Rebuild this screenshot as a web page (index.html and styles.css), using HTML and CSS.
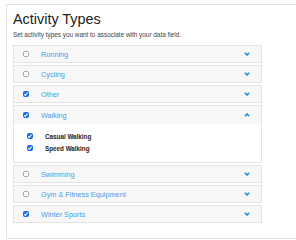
FILE: index.html
```html
<!DOCTYPE html>
<html>
<head>
<meta charset="utf-8">
<link rel="stylesheet" href="styles.css">
</head>
<body>
<div class="card">
  <h1 class="title">Activity Types</h1>
  <p class="subtitle">Set activity types you want to associate with your data field.</p>
  <div class="list">
    <div class="item">
      <div class="head"><span class="cb"></span><span class="label">Running</span><svg class="chev" viewBox="0 0 6 4"><path d="M0.8 0.8 L3 3 L5.2 0.8"/></svg></div>
    </div>
    <div class="item">
      <div class="head"><span class="cb"></span><span class="label">Cycling</span><svg class="chev" viewBox="0 0 6 4"><path d="M0.8 0.8 L3 3 L5.2 0.8"/></svg></div>
    </div>
    <div class="item">
      <div class="head"><span class="cb on"></span><span class="label">Other</span><svg class="chev" viewBox="0 0 6 4"><path d="M0.8 0.8 L3 3 L5.2 0.8"/></svg></div>
    </div>
    <div class="item open">
      <div class="head"><span class="cb on"></span><span class="label">Walking</span><svg class="chev" viewBox="0 0 6 4"><path d="M0.8 3.2 L3 1 L5.2 3.2"/></svg></div>
      <div class="body">
        <div class="sub"><span class="cb on"></span><span class="sublabel">Casual Walking</span></div>
        <div class="sub"><span class="cb on"></span><span class="sublabel">Speed Walking</span></div>
      </div>
    </div>
    <div class="item">
      <div class="head"><span class="cb"></span><span class="label">Swimming</span><svg class="chev" viewBox="0 0 6 4"><path d="M0.8 0.8 L3 3 L5.2 0.8"/></svg></div>
    </div>
    <div class="item">
      <div class="head"><span class="cb"></span><span class="label">Gym &amp; Fitness Equipment</span><svg class="chev" viewBox="0 0 6 4"><path d="M0.8 0.8 L3 3 L5.2 0.8"/></svg></div>
    </div>
    <div class="item">
      <div class="head"><span class="cb on"></span><span class="label">Winter Sports</span><svg class="chev" viewBox="0 0 6 4"><path d="M0.8 0.8 L3 3 L5.2 0.8"/></svg></div>
    </div>
  </div>
</div>
</body>
</html>
```
FILE: styles.css
```css
html, body {
  margin: 0;
  padding: 0;
  background: #fff;
  overflow: hidden;
}
body {
  font-family: "Liberation Sans", Arial, sans-serif;
  width: 296px;
  height: 240px;
}
.card {
  box-sizing: border-box;
  margin: 4px 0 0 6px;
  width: 300px;
  height: 235px;
  border: 1px solid #e2e2e2;
  padding: 6px 0 0 6px;
}
.title {
  margin: 0;
  font-size: 14.4px;
  line-height: 17px;
  font-weight: normal;
  color: #222;
}
.subtitle {
  margin: 3px 0 0;
  font-size: 6.4px;
  line-height: 8px;
  color: #444;
}
.list {
  margin-top: 6px;
  width: 249px;
  display: flex;
  flex-direction: column;
  gap: 2px;
}
.item {
  box-sizing: border-box;
  border: 1px solid #e4e4e4;
  background: #f7f7f7;
}
.head {
  box-sizing: border-box;
  height: 16px;
  display: flex;
  align-items: center;
  padding: 0 11px 0 9px;
}
.open .head {
  height: 18px;
}
.label {
  margin-left: 12px;
  font-size: 7.3px;
  color: #3fa2e6;
  flex: 1;
}
.chev {
  width: 6px;
  height: 4px;
  fill: none;
  stroke: #1b8fe6;
  stroke-width: 1.6;
}
.cb {
  box-sizing: border-box;
  position: relative;
  width: 6px;
  height: 6px;
  border: 1px solid #a8a8a8;
  border-radius: 1.5px;
  background: #fff;
  flex: none;
}
.cb.on {
  background: #1a6fe6;
  border-color: #1a6fe6;
}
.cb.on::after {
  content: "";
  position: absolute;
  left: 1.3px;
  top: 0;
  width: 1.4px;
  height: 2.6px;
  border-right: 1px solid #fff;
  border-bottom: 1px solid #fff;
  transform: rotate(40deg);
}
.body {
  background: #fff;
  height: 38px;
  box-sizing: border-box;
  padding: 6px 0 0 13px;
  display: flex;
  flex-direction: column;
}
.sub {
  height: 12px;
  display: flex;
  align-items: center;
}
.sublabel {
  margin-left: 12px;
  font-size: 6.3px;
  font-weight: bold;
  color: #222;
}
```
